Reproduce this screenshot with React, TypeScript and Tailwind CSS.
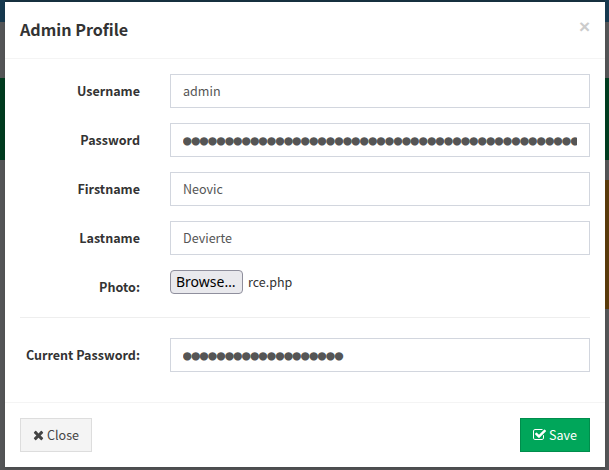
import type { ReactNode } from 'react';

const labelClass = 'w-[120px] shrink-0 pt-[7px] text-right text-[12.55px] leading-5 font-bold text-[#333]';
const boxClass = 'ml-[30px] flex h-[34px] w-[420px] items-center border border-[#d2d6de] bg-white px-3 text-[#555]';

function Row({ label, children }: { label: string; children: ReactNode }) {
  return (
    <div className="mb-[15px] flex h-[34px]">
      <label className={labelClass}>{label}</label>
      {children}
    </div>
  );
}

function TextBox({ value }: { value: string }) {
  return (
    <div className={boxClass}>
      <span className="text-[12.55px] leading-5">{value}</span>
    </div>
  );
}

function SecretBox({ count }: { count: number }) {
  return (
    <div className={boxClass}>
      <span className="block w-full overflow-hidden font-['DejaVu_Sans_Mono',monospace] text-[14px] leading-5 whitespace-nowrap">
        {'●'.repeat(count)}
      </span>
    </div>
  );
}

function CloseIcon() {
  return (
    <svg className="h-[14px] w-[11px]" viewBox="0 0 1408 1792" fill="currentColor">
      <path d="M1298 1322q0 40-28 68l-136 136q-28 28-68 28t-68-28l-294-294-294 294q-28 28-68 28t-68-28l-136-136q-28-28-28-68t28-68l294-294-294-294q-28-28-28-68t28-68l136-136q28-28 68-28t68 28l294 294 294-294q28-28 68-28t68 28l136 136q28 28 28 68t-28 68l-294 294 294 294q28 28 28 68z" />
    </svg>
  );
}

function CheckIcon() {
  return (
    <svg className="h-[14px] w-[13px]" viewBox="64 0 1664 1792" fill="currentColor">
      <path d="M1472 930v318q0 119-84.5 203.5t-203.5 84.5h-832q-119 0-203.5-84.5t-84.5-203.5v-832q0-119 84.5-203.5t203.5-84.5h832q63 0 117 25 15 7 18 23 3 17-9 29l-49 49q-10 10-23 10-3 0-9-2-23-6-45-6h-832q-66 0-113 47t-47 113v832q0 66 47 113t113 47h832q66 0 113-47t47-113v-254q0-13 9-22l64-64q10-10 23-10 6 0 12 3 20 8 20 29zm231-489l-814 814q-24 24-57 24t-57-24l-430-430q-24-24-24-57t24-57l110-110q24-24 57-24t57 24l263 263 647-647q24-24 57-24t57 24l110 110q24 24 24 57t-24 57z" />
    </svg>
  );
}

export default function App() {
  return (
    <div className="flex h-[470px] w-[609px] overflow-hidden bg-[#545557] font-['Noto_Sans_CJK_SC',sans-serif]">
      <div className="flex w-[5px] shrink-0 flex-col">
        <div className="h-[22px] bg-[#16394f]" />
        <div className="mt-14 h-[82px] bg-[#003b1f]" />
      </div>
      <div className="flex w-[600px] shrink-0 flex-col">
        <div className="h-[2px] shrink-0 bg-[#16303f]" />
        <div className="h-[465px] bg-white shadow-[0_2px_3px_rgba(0,0,0,0.125)]">
          <header className="flex h-[57px] justify-between border-b border-[#f4f4f4] px-[15px] pt-[15px]">
            <h4 className="text-[16.15px] leading-6 font-bold text-[#333]">Admin Profile</h4>
            <button className="-mt-px h-[21px] font-['Liberation_Sans',sans-serif] text-[19px] leading-[21px] font-bold text-[#ccc]">×</button>
          </header>
          <form className="h-[343px] px-[15px] pt-[15px]">
            <Row label="Username"><TextBox value="admin" /></Row>
            <Row label="Password"><SecretBox count={47} /></Row>
            <Row label="Firstname"><TextBox value="Neovic" /></Row>
            <Row label="Lastname"><TextBox value="Devierte" /></Row>
            <div className="flex h-[47px]">
              <label className={labelClass}>Photo:</label>
              <div className="ml-[30px] flex h-6 items-center gap-[5px]">
                <span className="flex h-6 w-[73px] items-center rounded-[4px] border border-[#8f8f9d] bg-[#e9e9ed] pl-[5px] font-['Noto_Sans',sans-serif] text-[14px] leading-5 text-black">
                  Browse…
                </span>
                <span className="text-[12.5px] leading-5 text-[#333]">rce.php</span>
              </div>
            </div>
            <hr className="mb-5 border-t border-[#eee]" />
            <Row label="Current Password:"><SecretBox count={19} /></Row>
          </form>
          <footer className="flex justify-between border-t border-[#f4f4f4] p-[15px]">
            <button className="flex h-[34px] w-[72px] items-center justify-center gap-[3px] border border-[#ddd] bg-[#f4f4f4] text-[12.55px] leading-5 text-[#444]">
              <CloseIcon /> Close
            </button>
            <button className="flex h-[34px] w-[70px] items-center justify-center gap-[3px] border border-[#008d4c] bg-[#00a65a] text-[12.55px] leading-5 text-white">
              <CheckIcon /> Save
            </button>
          </footer>
        </div>
      </div>
      <div className="flex w-1 shrink-0 flex-col">
        <div className="h-[22px] bg-[#16394f]" />
        <div className="mt-14 h-[82px] bg-[#003b1f]" />
        <div className="mt-5 h-[129px] bg-[#593a0b]" />
      </div>
    </div>
  );
}
